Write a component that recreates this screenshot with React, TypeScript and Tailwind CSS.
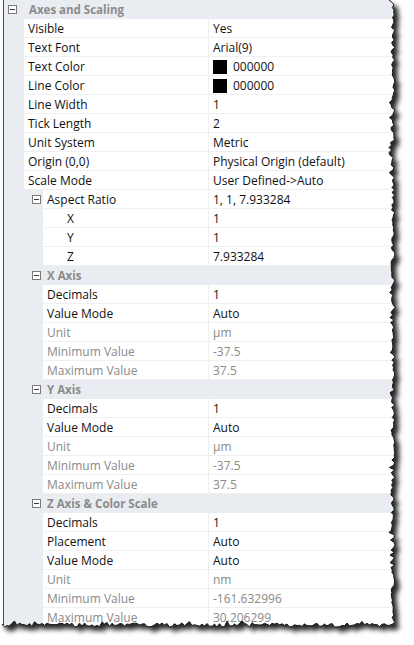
import React from 'react'

type Row =
  | { kind: 'cat'; depth: 0 | 1; label: string }
  | {
      kind?: 'prop'
      label: string
      value: string
      depth?: 0 | 1
      expander?: boolean
      sub?: boolean
      disabled?: boolean
      swatch?: boolean
    }

const axis = (name: string, unit: string, min: string, max: string, extra: Row[] = []): Row[] => [
  { kind: 'cat', depth: 1, label: name },
  { label: 'Decimals', value: '1', depth: 1 },
  ...extra,
  { label: 'Value Mode', value: 'Auto', depth: 1 },
  { label: 'Unit', value: unit, depth: 1, disabled: true },
  { label: 'Minimum Value', value: min, depth: 1, disabled: true },
  { label: 'Maximum Value', value: max, depth: 1, disabled: true },
]

const rows: Row[] = [
  { kind: 'cat', depth: 0, label: 'Axes and Scaling' },
  { label: 'Visible', value: 'Yes' },
  { label: 'Text Font', value: 'Arial(9)' },
  { label: 'Text Color', value: '000000', swatch: true },
  { label: 'Line Color', value: '000000', swatch: true },
  { label: 'Line Width', value: '1' },
  { label: 'Tick Length', value: '2' },
  { label: 'Unit System', value: 'Metric' },
  { label: 'Origin (0,0)', value: 'Physical Origin (default)' },
  { label: 'Scale Mode', value: 'User Defined->Auto' },
  { label: 'Aspect Ratio', value: '1, 1, 7.933284', depth: 1, expander: true },
  { label: 'X', value: '1', depth: 1, sub: true },
  { label: 'Y', value: '1', depth: 1, sub: true },
  { label: 'Z', value: '7.933284', depth: 1, sub: true },
  ...axis('X Axis', 'µm', '-37.5', '37.5'),
  ...axis('Y Axis', 'µm', '-37.5', '37.5'),
  ...axis('Z Axis & Color Scale', 'nm', '-161.632996', '30.206299', [
    { label: 'Placement', value: 'Auto', depth: 1 },
  ]),
]

function Expander() {
  return (
    <span className="flex h-[9px] w-[9px] items-center justify-center border border-[#7a7a7a] bg-white">
      <span className="h-px w-[5px] bg-[#3c3c3c]" />
    </span>
  )
}

function PropRow({ row }: { row: Row }) {
  if (row.kind === 'cat') {
    return (
      <div className="flex h-[19px] items-center bg-[#e9ecf0]">
        <span className={row.depth === 0 ? 'ml-[4px] mr-[12px]' : 'ml-[28px] mr-[6px]'}>
          <Expander />
        </span>
        <span className="pt-px text-[11.5px] font-bold text-[#8b8b8b]">{row.label}</span>
      </div>
    )
  }
  const depth = row.depth ?? 0
  const text = row.disabled ? 'text-[#8a8a8a]' : 'text-[#111]'
  return (
    <div className="flex h-[19px]">
      <div className="flex w-[205px] shrink-0">
        <div className={`flex shrink-0 items-center ${depth === 0 ? 'w-[20px]' : 'w-[39px]'}`}>
          {row.expander && (
            <span className="ml-[28px]">
              <Expander />
            </span>
          )}
        </div>
        <div
          className={`flex flex-1 items-center border-b border-r border-[#f0f0f0] bg-white pt-px ${row.sub ? 'pl-[24px]' : 'pl-[4px]'} ${text}`}
        >
          {row.label}
        </div>
      </div>
      <div className={`flex flex-1 items-center gap-[6px] border-b border-[#f0f0f0] bg-white pl-[4px] pt-px ${text}`}>
        {row.swatch && <span className="h-[14px] w-[14px] bg-black" />}
        {row.value}
      </div>
    </div>
  )
}

// jagged "torn paper" outline along the right and bottom edges
function tornPath() {
  let seed = 7
  const rnd = () => {
    seed = (seed * 16807) % 2147483647
    return seed / 2147483647
  }
  const pts: [number, number][] = [[0, 0]]
  for (let y = 0; y <= 624; y += 2.5) pts.push([391 + rnd() * 4 - (rnd() > 0.8 ? 2 : 0), y])
  for (let x = 392; x >= 0; x -= 2.5) pts.push([x, 623 + rnd() * 4 - (rnd() > 0.8 ? 2 : 0)])
  pts.push([0, 625])
  const shape = 'M' + pts.map(p => p.map(n => n.toFixed(1)).join(',')).join(' L') + ' Z'
  const edge = 'M' + pts.slice(1, -1).map(p => p.map(n => n.toFixed(1)).join(',')).join(' L')
  return { shape, edge }
}

function TornEdge() {
  const { shape, edge } = tornPath()
  return (
    <svg className="pointer-events-none absolute inset-0" width={414} height={645}>
      <defs>
        <filter id="blur" x="-10%" y="-10%" width="120%" height="120%">
          <feGaussianBlur stdDeviation="2.4" />
        </filter>
        <mask id="outside">
          <rect width={414} height={645} fill="white" />
          <path d={shape} fill="black" />
        </mask>
      </defs>
      <g mask="url(#outside)">
        <rect width={414} height={645} fill="white" />
        <path d={shape} transform="translate(5,5)" fill="#000" opacity={0.85} filter="url(#blur)" />
      </g>
      <path d={edge} fill="none" stroke="#1a1a1a" strokeWidth={1} />
    </svg>
  )
}

export default function App() {
  return (
    <div className="relative h-[645px] w-[414px] overflow-hidden bg-white font-['Open_Sans',sans-serif] text-[12px] leading-none">
      <div className="ml-[3px] w-[395px] border-l border-[#4e4e4e] bg-[#e9ecf0]">
        {rows.map((r, i) => (
          <PropRow key={i} row={r} />
        ))}
      </div>
      <TornEdge />
    </div>
  )
}
